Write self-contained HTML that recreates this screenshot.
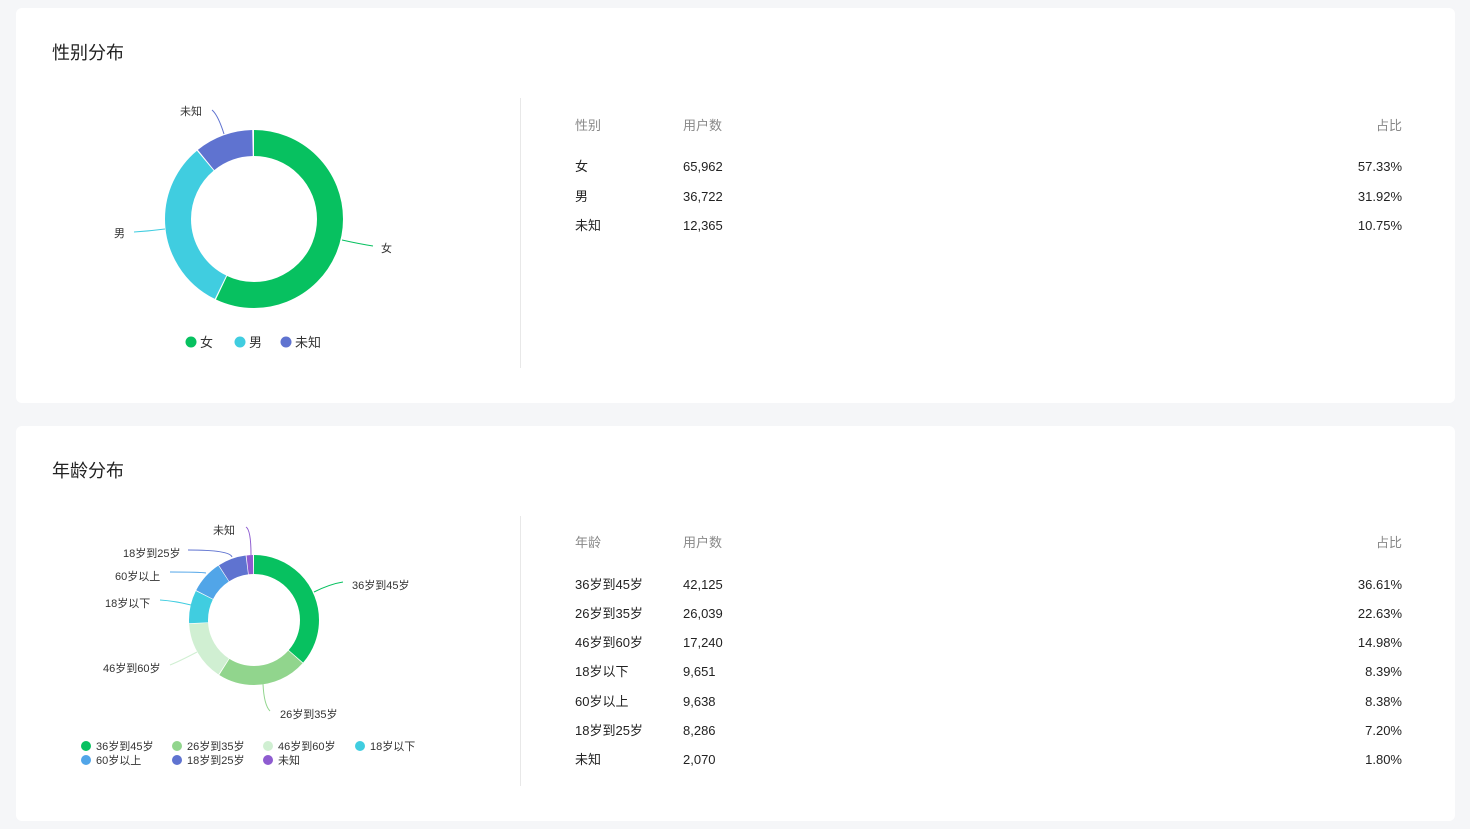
<!DOCTYPE html>
<html><head><meta charset="utf-8"><style>
*{margin:0;padding:0;box-sizing:border-box}
body{width:1470px;height:829px;background:#f5f6f8;font-family:"Liberation Sans","Noto Sans CJK SC",sans-serif;position:relative;overflow:hidden;color:#222}
.card{position:absolute;left:16px;width:1439px;background:#fff;border-radius:6px}
.t{position:absolute;white-space:nowrap}
.title{font-size:18px;color:#222}
.h{font-size:13px;color:#888}
.r{font-size:13px;color:#222}
.c{margin-top:-2px}
.n{margin-top:1px}
.rt{text-align:right;width:100px}
.div{position:absolute;left:520px;width:1px;background:#e8e8e8}
.lab{font-size:11px;color:#333;margin-top:-1px}
</style></head><body>
<div class="card" style="top:8px;height:395px"></div>
<div class="card" style="top:426px;height:395px"></div>

<div class="t title" style="left:52px;top:39px">性别分布</div>
<div class="t title" style="left:52px;top:457px">年龄分布</div>
<div class="div" style="top:98px;height:270px"></div>
<div class="div" style="top:516px;height:270px"></div>

<svg style="position:absolute;left:0;top:0" width="520" height="829">
<g transform="rotate(-90 254 219)" fill="none" stroke-width="26">
<circle cx="254" cy="219" r="76" pathLength="100" stroke="#07c160" stroke-dasharray="57.1 100" stroke-dashoffset="0"/>
<circle cx="254" cy="219" r="76" pathLength="100" stroke="#40cde0" stroke-dasharray="31.7 100" stroke-dashoffset="-57.33"/>
<circle cx="254" cy="219" r="76" pathLength="100" stroke="#5f73d0" stroke-dasharray="10.55 100" stroke-dashoffset="-89.25"/>
</g>
<path d="M342 240 Q360 244 373 246" stroke="#07c160" fill="none"/>
<path d="M165 229 Q150 231 134 232" stroke="#40cde0" fill="none"/>
<path d="M224 134 Q218 115 212 110" stroke="#5f73d0" fill="none"/>
<circle cx="191" cy="342" r="5.5" fill="#07c160"/>
<circle cx="240" cy="342" r="5.5" fill="#40cde0"/>
<circle cx="286" cy="342" r="5.5" fill="#5f73d0"/>

<g transform="rotate(-90 254 620)" fill="none" stroke-width="19">
<circle cx="254" cy="620" r="55.5" pathLength="100" stroke="#07c160" stroke-dasharray="36.4 100" stroke-dashoffset="0"/>
<circle cx="254" cy="620" r="55.5" pathLength="100" stroke="#91d58d" stroke-dasharray="22.4 100" stroke-dashoffset="-36.61"/>
<circle cx="254" cy="620" r="55.5" pathLength="100" stroke="#d0efd2" stroke-dasharray="14.8 100" stroke-dashoffset="-59.24"/>
<circle cx="254" cy="620" r="55.5" pathLength="100" stroke="#40cde0" stroke-dasharray="8.2 100" stroke-dashoffset="-74.22"/>
<circle cx="254" cy="620" r="55.5" pathLength="100" stroke="#51a5e8" stroke-dasharray="8.2 100" stroke-dashoffset="-82.61"/>
<circle cx="254" cy="620" r="55.5" pathLength="100" stroke="#5f73d0" stroke-dasharray="7.0 100" stroke-dashoffset="-90.99"/>
<circle cx="254" cy="620" r="55.5" pathLength="100" stroke="#8e5cd0" stroke-dasharray="1.6 100" stroke-dashoffset="-98.19"/>
</g>
<path d="M314 592 Q330 584 343 582" stroke="#07c160" fill="none"/>
<path d="M263 684 Q264 705 270 711" stroke="#91d58d" fill="none"/>
<path d="M197 652 Q180 661 170 665" stroke="#d0efd2" fill="none"/>
<path d="M191 605 Q175 601 160 600" stroke="#40cde0" fill="none"/>
<path d="M206 573 Q200 572 170 572" stroke="#51a5e8" fill="none"/>
<path d="M232 557 Q230 550 188 550" stroke="#5f73d0" fill="none"/>
<path d="M251 555 Q251 530 246 527" stroke="#8e5cd0" fill="none"/>
<circle cx="86" cy="746" r="5" fill="#07c160"/>
<circle cx="177" cy="746" r="5" fill="#91d58d"/>
<circle cx="268" cy="746" r="5" fill="#d0efd2"/>
<circle cx="360" cy="746" r="5" fill="#40cde0"/>
<circle cx="86" cy="760" r="5" fill="#51a5e8"/>
<circle cx="177" cy="760" r="5" fill="#5f73d0"/>
<circle cx="268" cy="760" r="5" fill="#8e5cd0"/>
</svg>

<div class="t lab" style="left:180px;top:104px">未知</div>
<div class="t lab" style="left:114px;top:226px">男</div>
<div class="t lab" style="left:381px;top:241px">女</div>
<div class="t" style="left:200px;top:332px;font-size:13px;color:#333">女</div>
<div class="t" style="left:249px;top:332px;font-size:13px;color:#333">男</div>
<div class="t" style="left:295px;top:332px;font-size:13px;color:#333">未知</div>

<div class="t lab" style="left:213px;top:523px">未知</div>
<div class="t lab" style="left:123px;top:546px">18岁到25岁</div>
<div class="t lab" style="left:115px;top:569px">60岁以上</div>
<div class="t lab" style="left:105px;top:596px">18岁以下</div>
<div class="t lab" style="left:103px;top:661px">46岁到60岁</div>
<div class="t lab" style="left:352px;top:578px">36岁到45岁</div>
<div class="t lab" style="left:280px;top:707px">26岁到35岁</div>
<div class="t lab" style="left:96px;top:739px">36岁到45岁</div>
<div class="t lab" style="left:187px;top:739px">26岁到35岁</div>
<div class="t lab" style="left:278px;top:739px">46岁到60岁</div>
<div class="t lab" style="left:370px;top:739px">18岁以下</div>
<div class="t lab" style="left:96px;top:753px">60岁以上</div>
<div class="t lab" style="left:187px;top:753px">18岁到25岁</div>
<div class="t lab" style="left:278px;top:753px">未知</div>

<div class="t h" style="left:575px;top:115px">性别</div>
<div class="t h" style="left:683px;top:115px">用户数</div>
<div class="t h rt" style="left:1302px;top:115px">占比</div>
<div class="t r c" style="left:575px;top:158px">女</div><div class="t r n" style="left:683px;top:158px">65,962</div><div class="t r rt n" style="left:1302px;top:158px">57.33%</div>
<div class="t r c" style="left:575px;top:188px">男</div><div class="t r n" style="left:683px;top:188px">36,722</div><div class="t r rt n" style="left:1302px;top:188px">31.92%</div>
<div class="t r c" style="left:575px;top:217px">未知</div><div class="t r n" style="left:683px;top:217px">12,365</div><div class="t r rt n" style="left:1302px;top:217px">10.75%</div>

<div class="t h" style="left:575px;top:532px">年龄</div>
<div class="t h" style="left:683px;top:532px">用户数</div>
<div class="t h rt" style="left:1302px;top:532px">占比</div>
<div class="t r c" style="left:575px;top:576px">36岁到45岁</div><div class="t r n" style="left:683px;top:576px">42,125</div><div class="t r rt n" style="left:1302px;top:576px">36.61%</div>
<div class="t r c" style="left:575px;top:605px">26岁到35岁</div><div class="t r n" style="left:683px;top:605px">26,039</div><div class="t r rt n" style="left:1302px;top:605px">22.63%</div>
<div class="t r c" style="left:575px;top:634px">46岁到60岁</div><div class="t r n" style="left:683px;top:634px">17,240</div><div class="t r rt n" style="left:1302px;top:634px">14.98%</div>
<div class="t r c" style="left:575px;top:663px">18岁以下</div><div class="t r n" style="left:683px;top:663px">9,651</div><div class="t r rt n" style="left:1302px;top:663px">8.39%</div>
<div class="t r c" style="left:575px;top:693px">60岁以上</div><div class="t r n" style="left:683px;top:693px">9,638</div><div class="t r rt n" style="left:1302px;top:693px">8.38%</div>
<div class="t r c" style="left:575px;top:722px">18岁到25岁</div><div class="t r n" style="left:683px;top:722px">8,286</div><div class="t r rt n" style="left:1302px;top:722px">7.20%</div>
<div class="t r c" style="left:575px;top:751px">未知</div><div class="t r n" style="left:683px;top:751px">2,070</div><div class="t r rt n" style="left:1302px;top:751px">1.80%</div>
</body></html>
